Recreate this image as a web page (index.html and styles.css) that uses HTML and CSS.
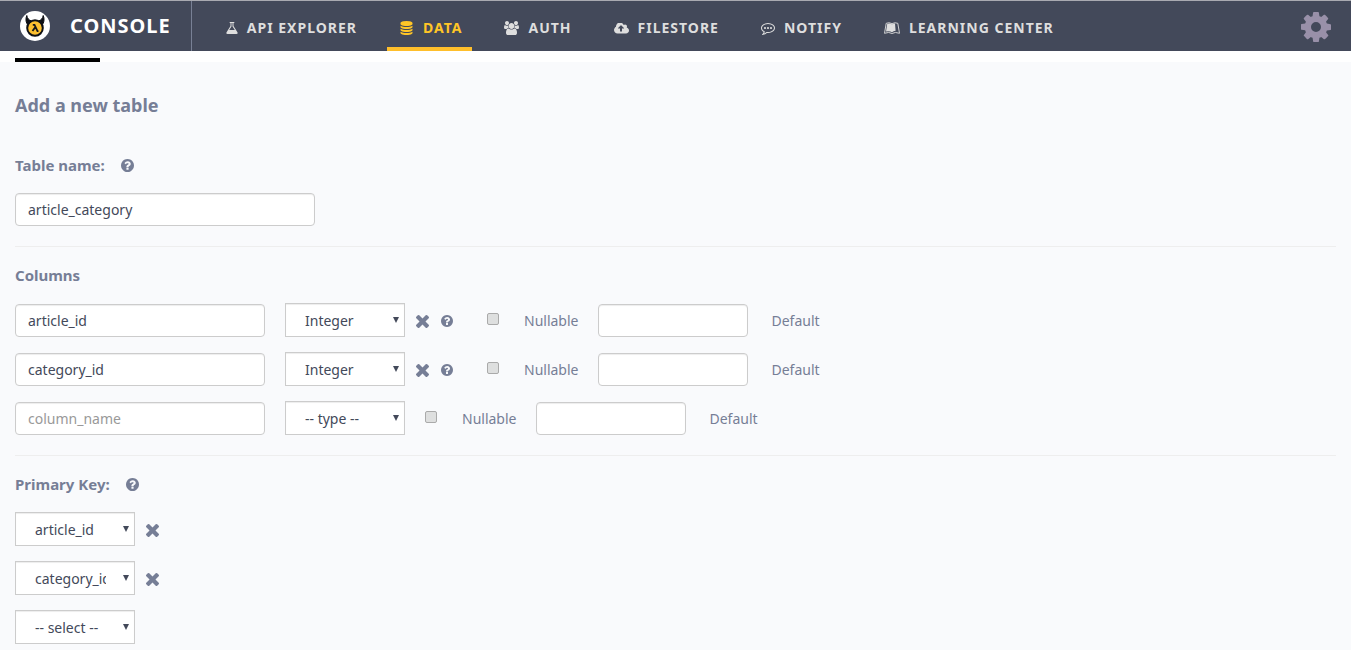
FILE: index.html
```html
<!DOCTYPE html>
<html lang="en">
<head>
<meta charset="utf-8">
<title>Console - Add a new table</title>
<link rel="stylesheet" href="styles.css">
</head>
<body>
<svg class="defs" aria-hidden="true">
  <symbol id="question" viewBox="128 128 1536 1536"><path d="M1024 1376v-192q0-14-9-23t-23-9h-192q-14 0-23 9t-9 23v192q0 14 9 23t23 9h192q14 0 23-9t9-23zm256-672q0-88-55.5-163t-138.5-116-170-41q-243 0-371 213-15 24 8 42l132 100q7 6 19 6 16 0 25-12 53-68 86-92 34-24 86-24 48 0 85.5 26t37.5 59q0 38-20 61t-68 45q-63 28-115.5 86.5t-52.5 125.5v36q0 14 9 23t23 9h192q14 0 23-9t9-23q0-19 21.5-49.5t54.5-49.5q32-18 49-28.5t46-35 44.5-48 28-60.5 12.5-81zm384 192q0 209-103 385.5t-279.5 279.5-385.5 103-385.5-103-279.5-279.5-103-385.5 103-385.5 279.5-279.5 385.5-103 385.5 103 279.5 279.5 103 385.5z"/></symbol>
  <symbol id="times" viewBox="302 366 1188 1188"><path d="M1490 1322q0 40-28 68l-136 136q-28 28-68 28t-68-28l-294-294-294 294q-28 28-68 28t-68-28l-136-136q-28-28-28-68t28-68l294-294-294-294q-28-28-28-68t28-68l136-136q28-28 68-28t68 28l294 294 294-294q28-28 68-28t68 28l136 136q28 28 28 68t-28 68l-294 294 294 294q28 28 28 68z"/></symbol>
</svg>
<header class="topbar">
  <a class="brand" href="#">
    <svg class="logo" viewBox="0 0 30 30" aria-hidden="true">
      <circle cx="15" cy="15" r="15" fill="#fff"/>
      <path d="M6.800 4.500C5.500 7.500 5.800 10.500 7 12.800L11 9.800C9 9 7.200 7.600 6.800 4.500ZM23.200 4.500C24.500 7.500 24.200 10.500 23 12.800L19 9.800C21 9 22.800 7.600 23.200 4.500Z" fill="#0d0f14" stroke="#0d0f14"/>
      <circle cx="15" cy="17" r="7.800" fill="#fdc02f" stroke="#0d0f14" stroke-width="2"/>
      <path d="M12.800 13.900h1.700l3 6.200h1M15 16.600l-2.500 3.500" fill="none" stroke="#16171b" stroke-width="1.800"/>
    </svg>
    <span class="brand-name">CONSOLE</span>
  </a>
  <nav class="tabs">
    <a class="tab" href="#"><svg class="icon" viewBox="165 128 1462 1536" width="12" height="12"><path d="M1591 1448q56 89 21.500 152.500t-140.500 63.500h-1152q-106 0-140.500-63.500t21.500-152.500l503-793v-399h-64q-26 0-45-19t-19-45 19-45 45-19h512q26 0 45 19t19 45-19 45-45 19h-64v399zm-779-725l-272 429h712l-272-429-20-31v-436h-128v436z"/></svg>API EXPLORER</a>
    <a class="tab active" href="#"><svg class="icon" viewBox="128 0 1536 1792" width="15" height="14"><path d="M896 768q237 0 443-43t325-127v170q0 69-103 128t-280 93.500-385 34.500-385-34.500-280-93.500-103-128v-170q119 84 325 127t443 43zm0 768q237 0 443-43t325-127v170q0 69-103 128t-280 93.500-385 34.500-385-34.500-280-93.500-103-128v-170q119 84 325 127t443 43zm0-384q237 0 443-43t325-127v170q0 69-103 128t-280 93.500-385 34.500-385-34.500-280-93.500-103-128v-170q119 84 325 127t443 43zm0-1152q208 0 385 34.500t280 93.500 103 128v128q0 69-103 128t-280 93.500-385 34.500-385-34.500-280-93.500-103-128v-128q0-69 103-128t280-93.500 385-34.500z"/></svg>DATA</a>
    <a class="tab" href="#"><svg class="icon" viewBox="-64 0 1920 1792" width="15" height="14"><path d="M529 896q-162 5-265 128h-134q-82 0-138-40.500t-56-118.500q0-353 124-353 6 0 43.500 21t97.500 42.500 119 21.500q67 0 133-23-5 37-5 66 0 139 81 256zm1071 637q0 120-73 189.500t-194 69.500h-874q-121 0-194-69.500t-73-189.500q0-53 3.500-103.500t14-109 26.500-108.500 43-97.500 62-81 85.500-53.500 111.500-20q10 0 43 21.500t73 48 107 48 135 21.500 135-21.500 107-48 73-48 43-21.500q61 0 111.500 20t85.500 53.500 62 81 43 97.500 26.500 108.500 14 109 3.500 103.500zm-1024-1277q0 106-75 181t-181 75-181-75-75-181 75-181 181-75 181 75 75 181zm704 384q0 159-112.500 271.500t-271.500 112.500-271.500-112.500-112.500-271.500 112.500-271.500 271.500-112.500 271.500 112.500 112.500 271.500zm576 225q0 78-56 118.500t-138 40.500h-134q-103-123-265-128 81-117 81-256 0-29-5-66 66 23 133 23 59 0 119-21.500t97.500-42.500 43.500-21q124 0 124 353zm-128-609q0 106-75 181t-181 75-181-75-75-181 75-181 181-75 181 75 75 181z"/></svg>AUTH</a>
    <a class="tab" href="#"><svg class="icon" viewBox="-64 256 1920 1280" width="15" height="11"><path d="M1216 864q0-14-9-23l-352-352q-9-9-23-9t-23 9l-351 351q-10 12-10 24 0 14 9 23t23 9h224v352q0 13 9.500 22.500t22.500 9.500h192q13 0 22.500-9.500t9.500-22.500v-352h224q13 0 22.500-9.500t9.500-22.500zm640 288q0 159-112.500 271.500t-271.500 112.500h-1088q-185 0-316.500-131.500t-131.500-316.500q0-130 70-240t188-165q-2-30-2-43 0-212 150-362t362-150q156 0 285.500 87t188.500 231q71-62 166-62 106 0 181 75t75 181q0 76-41 138 130 31 213.500 135.500t83.500 238.500z"/></svg>FILESTORE</a>
    <a class="tab" href="#"><svg class="icon" viewBox="0 128 1792 1664" width="14" height="13"><path d="M640 896q0 53-37.500 90.500t-90.500 37.500-90.500-37.500-37.500-90.500 37.500-90.500 90.500-37.500 90.500 37.500 37.500 90.500zm384 0q0 53-37.500 90.500t-90.500 37.500-90.500-37.500-37.500-90.500 37.500-90.500 90.500-37.500 90.500 37.500 37.500 90.500zm384 0q0 53-37.500 90.500t-90.500 37.500-90.500-37.500-37.500-90.500 37.500-90.500 90.500-37.500 90.500 37.500 37.500 90.500zm-512-512q-204 0-381.500 69.500t-282 187.500-104.500 255q0 112 71.500 213.500t201.500 175.500l87 50-27 96q-24 91-70 172 152-63 275-171l43-38 57 6q69 8 130 8 204 0 381.500-69.500t282-187.500 104.500-255-104.500-255-282-187.500-381.500-69.500zm896 512q0 174-120 321.500t-326 233-450 85.500q-70 0-145-8-198 175-460 242-49 14-114 22h-5q-15 0-27-10.500t-16-27.500v-1q-3-4-.5-12t2-10 4.500-9.500l6-9 7-8.500 8-9q7-8 31-34.500t34.500-38 31-39.500 32.500-51 27-59 26-76q-157-89-247.500-220t-90.500-281q0-130 71-248.500t191-204.500 286-136.500 348-50.500 348 50.500 286 136.500 191 204.500 71 248.500z"/></svg>NOTIFY</a>
    <a class="tab" href="#"><svg class="icon" viewBox="0 0 16 12" width="16" height="12"><path d="M.5 11.300L2.200 1.300Q5 .100 8 1.600Q11 .100 13.800 1.300L15.500 11.300Q11 9.500 8 11.500Q5 9.500 .5 11.300Z" fill="none" stroke="currentColor" stroke-width=".9"/><path d="M3.200 2Q5.600 1 8 2.300Q9.500 1.400 11 1.400L11.600 8.700Q9.500 8.800 8 10.200Q5.400 8.700 2 9.600Z"/></svg>LEARNING CENTER</a>
  </nav>
  <button class="settings" type="button" aria-label="Settings"><svg viewBox="128 128 1536 1536" width="30" height="30"><path fill="currentColor" d="M1152 896q0-106-75-181t-181-75-181 75-75 181 75 181 181 75 181-75 75-181zm512-109v222q0 12-8 23t-20 13l-185 28q-19 54-39 91 35 50 107 138 10 12 10 25t-9 23q-27 37-99 108t-94 71q-12 0-26-9l-138-108q-44 23-91 38-16 136-29 186-7 28-36 28h-222q-14 0-24.500-8.500t-11.500-21.500l-28-184q-49-16-90-37l-141 107q-10 9-25 9-14 0-25-11-126-114-165-168-7-10-7-23 0-12 8-23 15-21 51-66.500t54-70.500q-27-50-41-99l-183-27q-13-2-21-12.500t-8-23.500v-222q0-12 8-23t19-13l186-28q14-46 39-92-40-57-107-138-10-12-10-24 0-10 9-23 26-36 98.500-107.500t94.500-71.500q13 0 26 10l138 107q44-23 91-38 16-136 29-186 7-28 36-28h222q14 0 24.500 8.500t11.500 21.500l28 184q49 16 90 37l142-107q9-9 24-9 13 0 25 10 129 119 165 170 7 8 7 22 0 12-8 23-15 21-51 66.500t-54 70.500q26 50 41 98l183 28q13 2 21 12.500t8 23.500z"/></svg></button>
</header>
<div class="subbar"><div class="subbar-mark"></div></div>
<main class="page">
  <h1 class="title">Add a new table</h1>
  <form>
    <section class="section">
      <div class="heading"><label for="table-name">Table name:</label><svg class="help help-large"><use href="#question"/></svg></div>
      <input class="text name" id="table-name" type="text" value="article_category">
    </section>
    <section class="section">
      <h2 class="heading">Columns</h2>
      <div class="rows">
        <div class="row">
          <input class="text column" type="text" aria-label="Column name" value="article_id">
          <span class="pick"><select aria-label="Column type"><option>Integer</option></select></span>
          <div class="actions"><button class="remove" type="button" aria-label="Remove column"><svg class="times"><use href="#times"/></svg></button><svg class="help"><use href="#question"/></svg></div>
          <input class="check" id="null-1" type="checkbox"><label class="caption nullable" for="null-1">Nullable</label>
          <input class="text default" id="default-1" type="text"><label class="caption" for="default-1">Default</label>
        </div>
        <div class="row">
          <input class="text column" type="text" aria-label="Column name" value="category_id">
          <span class="pick"><select aria-label="Column type"><option>Integer</option></select></span>
          <div class="actions"><button class="remove" type="button" aria-label="Remove column"><svg class="times"><use href="#times"/></svg></button><svg class="help"><use href="#question"/></svg></div>
          <input class="check" id="null-2" type="checkbox"><label class="caption nullable" for="null-2">Nullable</label>
          <input class="text default" id="default-2" type="text"><label class="caption" for="default-2">Default</label>
        </div>
        <div class="row">
          <input class="text column" type="text" aria-label="Column name" placeholder="column_name">
          <span class="pick"><select aria-label="Column type"><option>-- type --</option></select></span>
          <input class="check" id="null-3" type="checkbox"><label class="caption nullable" for="null-3">Nullable</label>
          <input class="text default" id="default-3" type="text"><label class="caption" for="default-3">Default</label>
        </div>
      </div>
    </section>
    <section class="section">
      <h2 class="heading">Primary Key:<svg class="help help-large"><use href="#question"/></svg></h2>
      <div class="rows">
        <div class="row"><span class="pick"><select aria-label="Primary key column"><option>article_id</option></select></span><button class="remove" type="button" aria-label="Remove key"><svg class="times"><use href="#times"/></svg></button></div>
        <div class="row"><span class="pick"><select aria-label="Primary key column"><option>category_id</option></select></span><button class="remove" type="button" aria-label="Remove key"><svg class="times"><use href="#times"/></svg></button></div>
        <div class="row"><span class="pick"><select aria-label="Primary key column"><option>-- select --</option></select></span></div>
      </div>
    </section>
  </form>
</main>
</body>
</html>
```
FILE: styles.css
```css
* { box-sizing: border-box; }
body {
  margin: 0;
  background: #f9fafc;
  color: #767e96;
  font: 14px/20px "Noto Sans", "Open Sans", sans-serif;
}
.defs { display: none; }
button { padding: 0; border: 0; background: none; color: inherit; cursor: pointer; }
svg { display: block; flex: none; fill: currentColor; }

.topbar {
  display: flex;
  height: 51px;
  border-top: 1px solid #a9aab1;
  background: #43495a;
}
.brand {
  display: flex;
  align-items: center;
  gap: 20px;
  padding: 0 20px;
  border-right: 1px solid #788095;
  color: #fff;
  text-decoration: none;
}
.logo { width: 30px; height: 30px; }
.brand-name { font-size: 20px; font-weight: 700; letter-spacing: 1px; }
.tabs { display: flex; flex: 1; gap: 20px; padding-left: 22px; }
.tab {
  display: flex;
  align-items: center;
  gap: 9px;
  padding: 8px 10px 0 12px;
  border-bottom: 4px solid transparent;
  color: #dedede;
  font-weight: 700;
  letter-spacing: 1px;
  text-decoration: none;
  white-space: nowrap;
}
.tab.active { border-color: #ffbf2b; color: #ffc627; }
.settings { margin-right: 20px; padding-top: 2px; color: #9990a9; }

.subbar { height: 11px; padding: 7px 15px 0; background: #fff; }
.subbar-mark { width: 85px; height: 4px; background: #000; }

.page { padding: 30px 15px 0; }
.title { margin: 0 0 37px; font-size: 18px; line-height: 26px; }
.section + .section {
  margin-top: 20px;
  padding-top: 18px;
  border-top: 1px solid #eee;
}
.heading {
  display: flex;
  align-items: center;
  gap: 16px;
  margin: 0 0 18px;
  font-size: 15px;
  font-weight: 700;
  line-height: 20px;
}
.rows { display: grid; gap: 15px; }
.row { display: flex; align-items: center; height: 34px; }

.text {
  height: 33px;
  padding: 0 12px;
  border: 1px solid #ccc;
  border-radius: 4px;
  background: #fff;
  box-shadow: inset 0 1px 1px rgba(0, 0, 0, .075);
  color: #43495a;
  font: inherit;
}
.text::placeholder { color: #999; opacity: 1; }
.name { display: block; width: 300px; }
.column { width: 250px; margin-right: 20px; }
.default { width: 150px; margin-right: 24px; }

.pick { position: relative; width: 120px; }
.pick::after {
  content: "";
  position: absolute;
  top: 14px;
  right: 6px;
  border: 3px solid transparent;
  border-top: 6px solid #43495a;
  border-bottom: 0;
  pointer-events: none;
}
.pick select {
  display: block;
  width: 100%;
  height: 34px;
  padding: 2px 28px 0 19px;
  border: 1px solid #ccc;
  border-radius: 0;
  background: #fff;
  box-shadow: inset 0 1px 1px rgba(0, 0, 0, .075);
  color: #43495a;
  font: inherit;
  appearance: none;
}
.actions { display: flex; align-items: center; gap: 12px; margin-right: 14px; padding-top: 1px; }
.remove { margin-left: 11px; padding-top: 3px; }
.actions .remove { padding-top: 1px; }
.times { width: 13px; height: 13px; }
.help { width: 12px; height: 12px; }
.help-large { width: 13px; height: 13px; }
.check {
  width: 12px;
  height: 12px;
  margin: 0 25px 2px 20px;
  border: 1px solid #aaa;
  border-radius: 2px;
  background: #dedfdf;
  appearance: none;
}
.check:checked { background: #767e96; }
.caption { padding-top: 2px; }
.nullable { margin-right: 19px; }
```
